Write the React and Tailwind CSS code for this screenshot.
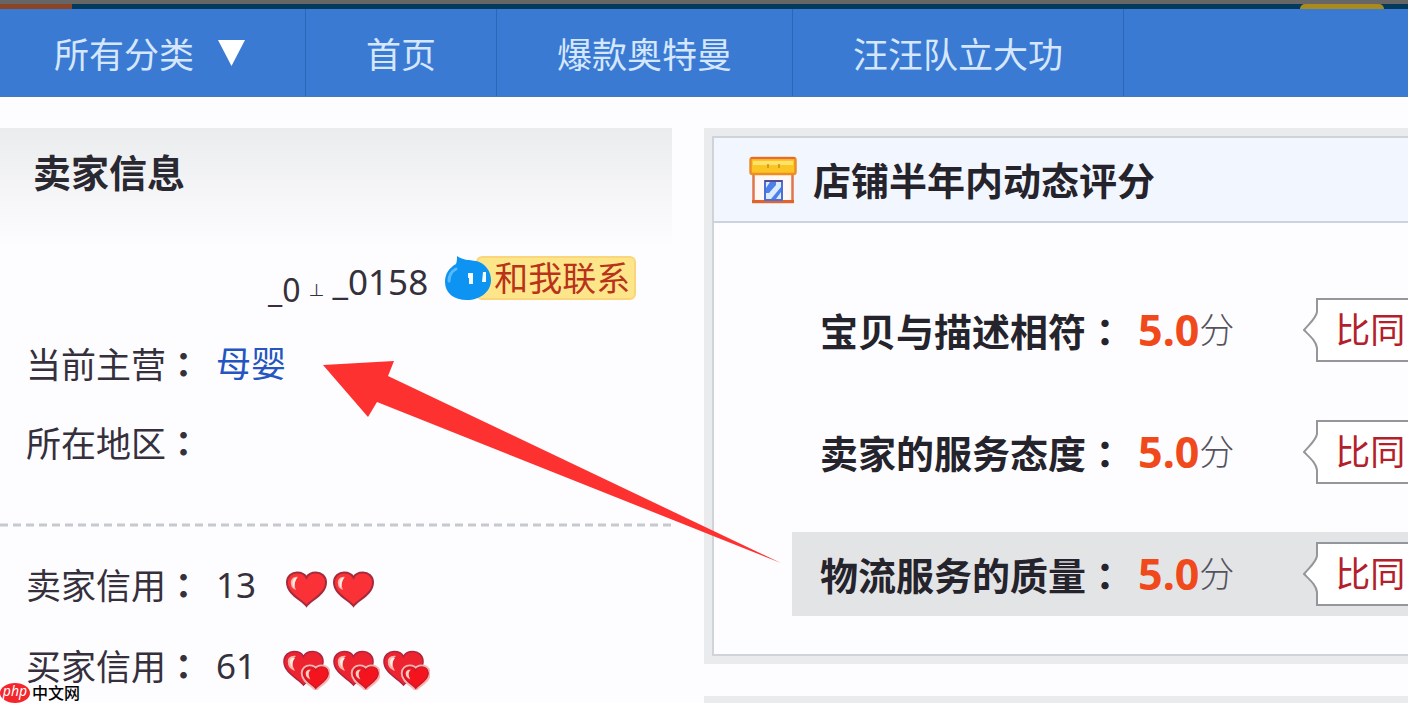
import React from "react";

const navItems = ["首页", "爆款奥特曼", "汪汪队立大功"];

const scores = [
  { label: "宝贝与描述相符", value: "5.0", active: false },
  { label: "卖家的服务态度", value: "5.0", active: false },
  { label: "物流服务的质量", value: "5.0", active: true },
];

// Full-width colon, centred in its cell
const Colon = () => (
  <span className="font-['Noto_Sans_CJK_TC',sans-serif] font-bold">：</span>
);

const HEART =
  "M21.5 35 C17 29 2 23 2 11.5 C2 5 7 1.5 12 1.5 C16.500 1.5 20 3.500 21.5 6.500 C23 3.500 26.500 1.5 31 1.5 C36 1.5 41 5 41 11.5 C41 23 26 29 21.5 35 Z";

const Heart = () => (
  <svg width="43" height="37" viewBox="0 0 43 37">
    <path d={HEART} fill="#fa3136" stroke="#a62a3c" strokeWidth="2" />
    <path d="M6 13 C5 8 9 5 13 6 C9 9 9 14 11 19 C8 18 6 16 6 13 Z" fill="#fbb9b2" />
    <path d="M10 7 C7 9 7 14 9 17 C9.500 13 10 10 12 7 Z" fill="#fff0e4" />
  </svg>
);

const DoubleHeart = () => (
  <svg width="48" height="40" viewBox="0 0 48 40">
    <path d={HEART} fill="#ee2330" stroke="#b02440" strokeWidth="1.6" />
    <path d="M6 13 C5 8 9 5 14 6 C9 10 10 15 13 21 C8 19 6 16 6 13 Z" fill="#fbb9b2" />
    <path d="M10 8 C7 10 8 14 10 17 C10.500 13 11 10 13 8 Z" fill="#fff0e4" />
    <g transform="translate(20 16) scale(0.64)">
      <path d={HEART} fill="#fbc0bd" stroke="#fbb4b2" strokeWidth="8" />
      <path d={HEART} fill="#f4141d" stroke="#c01c2a" strokeWidth="2" />
      <path d="M6 13 C5 8 9 5 14 6 C9 10 10 15 13 21 C8 19 6 16 6 13 Z" fill="#fcd0c8" />
    </g>
  </svg>
);

const ShopIcon = () => (
  <svg width="48" height="48" viewBox="0 0 48 48">
    <rect x="4.500" y="16" width="39" height="30" fill="#fff8f4" stroke="#e0764c" strokeWidth="2.500" />
    <path d="M3 45.500 H45" stroke="#e0642c" strokeWidth="3" />
    <rect x="1.5" y="2" width="45" height="16" rx="2" fill="#fbc524" stroke="#ee8d26" strokeWidth="2.500" />
    <path d="M4 5 H44 V9 H4 Z" fill="#fde36c" />
    <path d="M2 2 H46" stroke="#e46c34" strokeWidth="2" />
    <path d="M19 8 V12 M30 8 V12" stroke="#c98a1c" strokeWidth="1.5" />
    <rect x="16" y="25" width="17" height="19" fill="#dcebff" stroke="#4a70d8" strokeWidth="2" />
    <path d="M17 37 V32 L21 26 H27 V29 L20 37 Z M22 43 L32 31 V36 L27 43 Z" fill="#4a82ea" />
    <path d="M16 25 H33" stroke="#5a4a90" strokeWidth="2" />
  </svg>
);

const WangwangIcon = () => (
  <svg width="48" height="48" viewBox="0 0 48 48" className="z-10">
    <path
      d="M13 2 C18 6 25 6 32 7 C41 9 47 17 47 26 C47 38 36 46 23 46 C10 46 1 39 1 28 C1 20 5 14 12 10 C13 7 13 5 13 2 Z"
      fill="#0d93f2"
    />
    <path d="M5 27 C5 21 8 17 12 15" fill="none" stroke="#58bafa" strokeWidth="3" strokeLinecap="round" />
    <path d="M24 19 H29 V30 H25 V24 H24 Z M39 18 H42 V28 H38 Z" fill="#f2fbff" />
  </svg>
);

const TopStrip = () => (
  <div className="shrink-0">
    <div className="h-1 bg-[#666666]" />
    <div className="flex h-[5px] bg-[#033a5c]">
      <div className="w-18 bg-[#8a4526]" />
      <div className="flex-1" />
      <div className="mr-6 w-21 rounded-t-full bg-[#a98a1c]" />
    </div>
  </div>
);

const NavBar = () => (
  <nav className="flex h-22 shrink-0 items-stretch border-b border-[#4a78b8] bg-[#3b7ad2] text-[35px] leading-[48px] text-[#d5e7ff]">
    <a
      href="#all"
      className="flex items-center gap-6 border-r border-[#2c66b8] pt-1 pr-15 pl-[54px]"
    >
      所有分类
      <svg width="27" height="26" viewBox="0 0 27 26" className="mb-1">
        <path d="M0 0 H27 L13.5 26 Z" fill="#ffffff" />
      </svg>
    </a>
    {navItems.map((item) => (
      <a
        key={item}
        href="#shop"
        className="flex items-center border-r border-[#2c66b8] px-15 pt-1"
      >
        {item}
      </a>
    ))}
  </nav>
);

const SellerRow = ({ label, children }) => (
  <div className="flex h-12 items-center pl-[26px]">
    <span>
      {label}
      <Colon />
    </span>
    <span className="ml-[15px] flex items-center">{children}</span>
  </div>
);

const SellerInfo = () => (
  <aside className="w-[672px] shrink-0 bg-[linear-gradient(#ebecee,#fdfdff_120px)] text-[35px] leading-[48px] text-[#35303c]">
    <h2 className="pt-5 pl-[33px] text-[38px] font-bold text-[#2a2830]">
      卖家信息
    </h2>

    <div className="mt-[62px] flex h-12 items-center pl-[268px]">
      <span className="mt-4 text-[32px]">_0</span>
      <span className="mt-4 ml-2 text-base">⊥</span>
      <span className="ml-2">_0158</span>
      <a href="#contact" className="ml-4 flex items-center pb-2">
        <WangwangIcon />
        <span className="-ml-4 rounded-md border-2 border-[#fbd57c] bg-[#fde68a] pr-1 pl-4 text-[34px] leading-[40px] text-[#b8331a]">
          和我联系
        </span>
      </a>
    </div>

    <div className="mt-[34px]">
      <SellerRow label="当前主营">
        <a href="#category" className="text-[#2455c0]">
          母婴
        </a>
      </SellerRow>
    </div>
    <div className="mt-[31px]">
      <SellerRow label="所在地区" />
    </div>

    <svg width="100%" height="4" className="mt-14 block">
      <line x1="0" y1="2" x2="100%" y2="2" stroke="#c6c9ce" strokeWidth="3" strokeDasharray="8 5" />
    </svg>

    <div className="mt-[34px]">
      <SellerRow label="卖家信用">
        <span className="mr-[29px]">13</span>
        <span className="mt-2 flex gap-1">
          <Heart />
          <Heart />
        </span>
      </SellerRow>
    </div>
    <div className="mt-[33px]">
      <SellerRow label="买家信用">
        <span className="mr-[26px]">61</span>
        <span className="mt-2 flex gap-[2px]">
          <DoubleHeart />
          <DoubleHeart />
          <DoubleHeart />
        </span>
      </SellerRow>
    </div>
  </aside>
);

const CompareTag = () => (
  <div className="ml-[69px] flex h-16 flex-1">
    <svg width="16" height="64" viewBox="0 0 16 64" className="shrink-0">
      <path
        d="M16 1 H14 V14 C13 20 8 24 1 32 C8 39 13 43 14 50 V63 H16"
        fill="#ffffff"
        stroke="#94969b"
        strokeWidth="2"
      />
    </svg>
    <div className="flex flex-1 items-center border-y-2 border-[#94969b] bg-white pl-4 text-[35px] leading-[48px] text-[#b3202a]">
      比同
    </div>
  </div>
);

const ScoreRow = ({ score }) => (
  <li
    className={`ml-[78px] flex h-21 items-center pl-7 ${
      score.active ? "bg-[#e3e4e6]" : ""
    }`}
  >
    <span className="shrink-0 text-[38px] leading-[48px] font-bold text-[#25232b]">
      {score.label}
      <Colon />
    </span>
    <span className="ml-[14px] shrink-0 text-[43px] leading-[48px] font-bold text-[#f0491c]">
      {score.value}
    </span>
    <span className="shrink-0 text-[35px] leading-[48px] font-light text-[#55525e]">
      分
    </span>
    <CompareTag />
  </li>
);

const ShopScores = () => (
  <section className="border-y-8 border-l-8 border-[#e9ebed]">
    <div className="border-y-2 border-l-2 border-[#d0d4d8]">
      <div className="flex h-[85px] items-center gap-4 border-b-2 border-[#cbd3dc] bg-[#f2f6fe] pl-[35px]">
        <ShopIcon />
        <h2 className="text-[38px] leading-[48px] font-bold text-[#25232b]">
          店铺半年内动态评分
        </h2>
      </div>
      <ul className="flex flex-col gap-[38px] bg-[#fdfdff] pt-[65px] pb-[38px]">
        {scores.map((score) => (
          <ScoreRow key={score.label} score={score} />
        ))}
      </ul>
    </div>
  </section>
);

// Red annotation arrow pointing at the main category
const Arrow = () => (
  <svg
    width="460"
    height="204"
    viewBox="0 0 460 204"
    className="pointer-events-none absolute top-[360px] left-[322px]"
  >
    <path d="M1 5 L72 1 L66 16 L459 203 L55 42 L46 57 Z" fill="#fd3230" />
  </svg>
);

const Watermark = () => (
  <div className="absolute bottom-0 left-0 flex h-5 items-center gap-[2px] text-base leading-4 text-black">
    <span className="flex h-5 w-[30px] items-center justify-center rounded-[50%] bg-[#f4262c] pb-1 text-sm leading-4 text-white italic">
      php
    </span>
    <span className="font-medium">中文网</span>
  </div>
);

const App = () => {
  return (
    <div className="relative flex h-screen flex-col overflow-hidden bg-[#fdfdff] font-['Noto_Sans','Noto_Sans_CJK_SC',sans-serif]">
      <TopStrip />
      <NavBar />
      <main className="mt-[31px] flex items-start gap-8">
        <SellerInfo />
        <div className="flex min-w-0 flex-1 flex-col gap-8">
          <ShopScores />
          <div className="border-8 border-r-0 border-[#e9ebed] pb-20" />
        </div>
      </main>
      <Arrow />
      <Watermark />
    </div>
  );
};

export default App;
